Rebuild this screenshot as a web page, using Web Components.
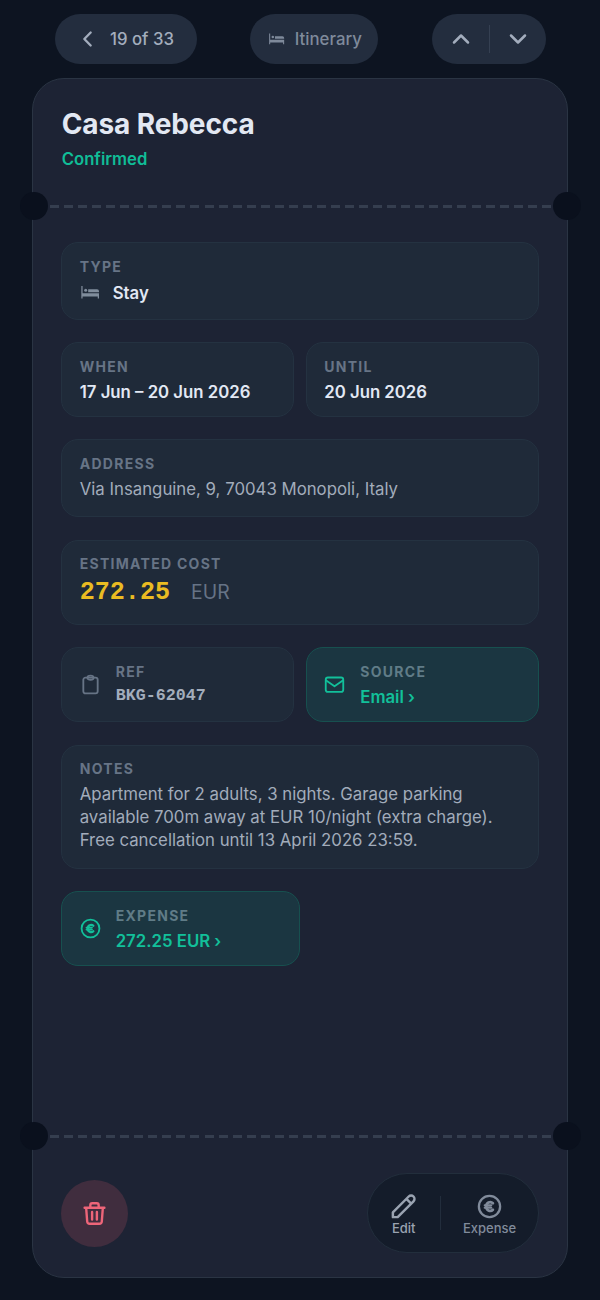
<!DOCTYPE html>
<html lang="en">
<head>
<meta charset="utf-8">
<title>Casa Rebecca</title>
<style>
html,body{margin:0;background:#0d1421}
body{font-family:Inter,"Liberation Sans",sans-serif;color:#e2e8f2}
</style>
</head>
<body>
<booking-screen></booking-screen>
<script>
const ICONS = {
  left:'<path d="M15.200 4.200l-7.600 7.800 7.600 7.800" stroke-width="2.800"/>',
  up:'<path d="M5 15.500l7-7 7 7" stroke-width="2.500"/>',
  down:'<path d="M5 8.500l7 7 7-7" stroke-width="2.500"/>',
  bed:'<g fill="currentColor" stroke="none"><path d="M1.600 3.500h1.500v8.700h19.700v6.400h-1.500v-2.400H3.100v2.400H1.600z"/><circle cx="6.800" cy="8.600" r="1.800"/><path d="M9.800 7.500h10.600a2.400 2.400 0 0 1 2.400 2.400v1.200h-13z"/></g>',
  clipboard:'<rect x="3.800" y="4.200" width="16.400" height="18" rx="2.400"/><path d="M8.500 4.200C8.500 2.500 10 1.800 12 1.800s3.500.7 3.500 2.400S14 6.600 12 6.600 8.500 5.900 8.500 4.200z"/>',
  mail:'<rect x="2" y="4" width="20" height="16.500" rx="2.500"/><path d="M2.500 7.500L12 14l9.500-6.500"/>',
  euro:'<circle cx="12" cy="12" r="10.200"/><path d="M15.300 8.900A3.700 3.700 0 0 0 9 12a3.700 3.700 0 0 0 6.300 3.100" stroke-width="2.500"/><path d="M7.400 10.900h6.300M7.400 13.200h6.300" stroke-width="2"/>',
  trash:'<path d="M2.500 6.500h19M8 6.300V4a1.800 1.800 0 0 1 1.800-1.800h4.400A1.800 1.800 0 0 1 16 4v2.300M4 6.700l1 13a2.400 2.400 0 0 0 2.400 2.200h9.200a2.400 2.400 0 0 0 2.400-2.200l1-13M9.700 10.500v7.300M14.300 10.500v7.300"/>',
  pencil:'<path d="M1.800 22.200v-4.600L17 2.400a3.200 3.200 0 0 1 4.600 4.600L6.400 22.200zM14.800 4.600l4.600 4.600"/>'
};
const define = (name, html, setup) => {
  const t = document.createElement('template');
  t.innerHTML = html;
  customElements.define(name, class extends HTMLElement {
    connectedCallback() {
      if (this.shadowRoot) return;
      this.attachShadow({mode:'open'}).append(t.content.cloneNode(true));
      if (setup) setup(this, this.shadowRoot);
    }
  });
};

define('ui-icon', `<style>:host{display:block;flex:none;width:var(--size,20px);height:var(--size,20px)}
svg{display:block;width:100%;height:100%;overflow:visible;fill:none;stroke:currentColor;stroke-width:var(--sw,2);stroke-linecap:round;stroke-linejoin:round}</style><svg viewBox="0 0 24 24"></svg>`,
  (el, r) => { r.querySelector('svg').innerHTML = ICONS[el.getAttribute('name')]; });

define('nav-pill', `<style>:host{display:flex;align-items:center;box-sizing:border-box;height:50px;border-radius:25px;background:#232d3e;color:#a3adbd;font-size:16.7px;font-weight:500;white-space:nowrap}</style><slot></slot>`);

define('info-field', `<style>
:host{display:flex;align-items:center;gap:15px;box-sizing:border-box;padding:0 17.300px;border:1.4px solid #243241;border-radius:17px;background:#1f2a39;color:#e2e8f4}
:host([accent]){background:#1b3641;border-color:#17504f;color:#12c09a}
.copy{align-self:flex-start;padding-top:13.800px;min-width:0}
.label{font-size:14px;line-height:20px;font-weight:700;letter-spacing:1.28px;color:#677486}
:host([accent]) .label{color:#607c87}
.value{margin-top:4px;font-size:16.75px;line-height:23px;font-weight:600}
</style><slot name="icon"></slot><div class="copy"><div class="label"></div><div class="value"><slot></slot></div></div>`,
  (el, r) => { r.querySelector('.label').textContent = el.getAttribute('label'); });

define('ticket-tear', `<style>
:host{display:flex;align-items:center;justify-content:space-between;height:28px;margin:0 -13.500px}
i{flex:none;width:28px;height:28px;border-radius:50%;background:#0a101d}
b{flex:1;height:3px;margin:1px 2px 0;background:repeating-linear-gradient(90deg,#353e4f 0 9px,transparent 9px 14.050px)}
</style><i></i><b></b><i></i>`);

define('tool-button', `<style>:host{display:flex;flex-direction:column;align-items:center;gap:0;padding-top:4px;font-size:13px;line-height:18px;font-weight:500;color:#9aa3b1;--size:25px}</style><ui-icon></ui-icon><slot></slot>`,
  (el, r) => {
    const icon = document.createElement('ui-icon');
    icon.setAttribute('name', el.getAttribute('icon'));
    r.querySelector('ui-icon').replaceWith(icon);
  });

define('booking-card', `<style>
:host{display:flex;flex-direction:column;box-sizing:border-box;margin:0 32px;height:1200px;border:1.5px solid #2a3443;border-radius:32px;background:#1d2334}
header{box-sizing:border-box;height:113px;padding:27px 28.700px 0}
.body{box-sizing:border-box;height:902px;padding:22px 28px 0 28.400px}
footer{display:flex;align-items:center;justify-content:space-between;height:98px;padding:0 28px 0 28.400px;margin-top:14px}
</style><header><slot name="head"></slot></header><ticket-tear></ticket-tear><div class="body"><slot></slot></div><ticket-tear></ticket-tear><footer><slot name="foot"></slot></footer>`);

define('booking-screen', `<style>
:host{display:block;width:600px;height:1300px;overflow:hidden;background:#0d1421}
nav{display:flex;justify-content:space-between;padding:14px 54.500px 14px}
.count{width:142.500px;padding-left:23px;--size:20px}
.count span{margin-left:12.500px;font-size:16.750px}
.itin{width:128.500px;padding-left:18px;color:#7f8a9b;--size:17px;margin-left:-1px}
.itin span{margin-left:10px;font-size:16.800px}
.arrows{width:113.500px;justify-content:center;gap:16px;--size:24px;padding-left:1px}
.arrows i{width:1.400px;height:28px;background:#354052}
h1{margin:0;font-size:28px;line-height:36px;font-weight:700;letter-spacing:-.1px;color:#e2e8f3}
.status{margin-top:6px;font-size:16.700px;line-height:22px;font-weight:600;color:#10bd97}
.grid{display:grid;grid-template-columns:minmax(0,1fr) minmax(0,1fr);column-gap:11.500px;row-gap:22.400px;grid-template-rows:77.500px 75px 78px 85px 75.200px 124px 75px}
.wide{grid-column:1/-1}
.muted{color:#a2acbb;font-weight:400;font-size:16.800px}
.stay{display:flex;align-items:center;height:25px;--size:20px}
.stay ui-icon{color:#808d9c;margin-right:13px}
.amount{display:flex;align-items:center;height:29px;margin-top:4px}
.amount b{font:700 25.100px "Liberation Mono",monospace;color:#eabb22}
.amount span{margin-left:21px;font-size:19.400px;font-weight:400;color:#667386}
.ref{font:700 16.700px/23px "Liberation Mono",monospace;color:#a3adbc;display:block;margin-top:-2px}
info-field ui-icon{--size:21px;--sw:2.100}
info-field .stay ui-icon{--size:20px}
.clip{color:#677486}
.expense{width:238.500px}
.trash{display:flex;align-items:center;justify-content:center;width:67px;height:67px;border-radius:50%;background:#402d3e;color:#ee6579;--size:25px;--sw:2.300}
.tools{display:flex;align-items:center;box-sizing:border-box;width:172.500px;height:80px;border:1.400px solid #222e3c;border-radius:40px;background:#141c2a}
.tools .edit{width:72.500px;--sw:2.350}
.tools .exp{width:97px;color:#818b9b;--sw:2.200}
.tools i{width:1.400px;height:34px;background:#222d3c}
</style>
<nav>
 <nav-pill class="count"><ui-icon name="left"></ui-icon><span>19 of 33</span></nav-pill>
 <nav-pill class="itin"><ui-icon name="bed"></ui-icon><span>Itinerary</span></nav-pill>
 <nav-pill class="arrows"><ui-icon name="up"></ui-icon><i></i><ui-icon name="down"></ui-icon></nav-pill>
</nav>
<booking-card>
 <div slot="head"><h1>Casa Rebecca</h1><div class="status">Confirmed</div></div>
 <div class="grid">
  <info-field class="wide" label="TYPE"><div class="stay"><ui-icon name="bed"></ui-icon><span>Stay</span></div></info-field>
  <info-field label="WHEN">17 Jun – 20 Jun 2026</info-field>
  <info-field label="UNTIL">20 Jun 2026</info-field>
  <info-field class="wide" label="ADDRESS"><span class="muted">Via Insanguine, 9, 70043 Monopoli, Italy</span></info-field>
  <info-field class="wide" label="ESTIMATED COST"><div class="amount"><b>272.25</b><span>EUR</span></div></info-field>
  <info-field label="REF"><ui-icon class="clip" slot="icon" name="clipboard"></ui-icon><span class="ref">BKG-62047</span></info-field>
  <info-field accent label="SOURCE"><ui-icon slot="icon" name="mail"></ui-icon>Email ›</info-field>
  <info-field class="wide" label="NOTES"><span class="muted">Apartment for 2 adults, 3 nights. Garage parking<br>available 700m away at EUR 10/night (extra charge).<br>Free cancellation until 13 April 2026 23:59.</span></info-field>
  <info-field class="wide expense" accent label="EXPENSE"><ui-icon slot="icon" name="euro"></ui-icon>272.25 EUR ›</info-field>
 </div>
 <div slot="foot" class="trash"><ui-icon name="trash"></ui-icon></div>
 <div slot="foot" class="tools"><tool-button class="edit" icon="pencil">Edit</tool-button><i></i><tool-button class="exp" icon="euro">Expense</tool-button></div>
</booking-card>`);
</script>
</body>
</html>
